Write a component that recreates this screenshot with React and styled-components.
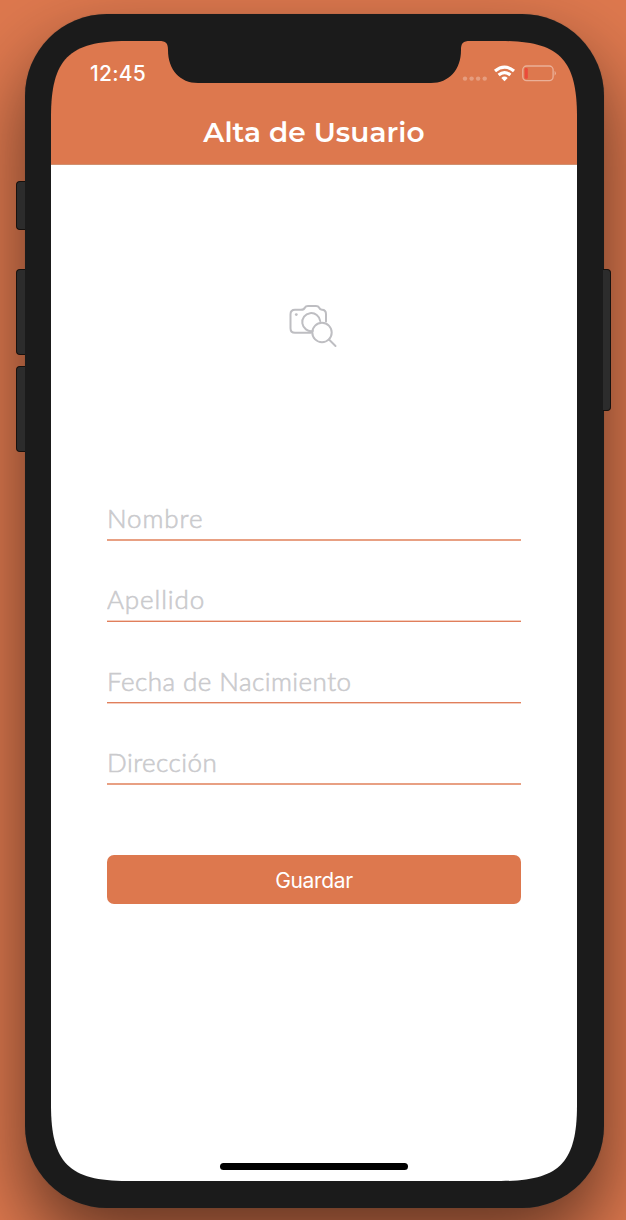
import React from 'react';
import styled, { createGlobalStyle } from 'styled-components';

const accent = '#dd784e';

const GlobalStyle = createGlobalStyle`
  *, *::before, *::after { box-sizing: border-box; }
  body { margin: 0; background: ${accent}; }
`;

const Stage = styled.div`
  height: 1220px;
  padding: 14px 22.5px 0 24.5px;
  overflow: hidden;
  background: ${accent};
`;

const Phone = styled.div`
  position: relative;
  width: 579px;
  height: 1194px;
  padding: 27px 26.5px;
  border-radius: 82px;
  background: #1b1b1b;
  box-shadow: 0 0 1px rgba(100, 80, 70, 0.8), 0 36px 76px rgba(0, 0, 0, 0.55);
`;

const SideButton = styled.span`
  position: absolute;
  top: ${(p) => p.$top}px;
  ${(p) => p.$side}: ${(p) => (p.$side === 'left' ? -8.5 : -7.5)}px;
  width: ${(p) => (p.$side === 'left' ? 9 : 8.5)}px;
  height: ${(p) => p.$height}px;
  background: #2c2c2c;
  border: 1px solid #17110e;
  border-radius: ${(p) => (p.$side === 'left' ? '4px 0 0 4px' : '0 4px 4px 0')};
  border-${(p) => (p.$side === 'left' ? 'right' : 'left')}: 0;
`;

const Screen = styled.main`
  position: relative;
  display: flex;
  flex-direction: column;
  width: 526px;
  height: 1140px;
  background: linear-gradient(${accent} 123px, #fff 123px);
  clip-path: path('M0 76 C0 18 18 0 76 0 H450 C508 0 526 18 526 76 V1064 C526 1122 508 1140 450 1140 H76 C18 1140 0 1122 0 1064 Z');
`;

const Notch = styled.svg`
  position: absolute;
  top: 0;
  left: 108px;
`;

const Header = styled.header`
  height: 124px;
  border-bottom: 1px solid #d1906f;
  color: #fff;
`;

const StatusBar = styled.div`
  display: flex;
  justify-content: space-between;
  height: 65px;
  padding: 20px 21px 0 39px;
`;

const Clock = styled.span`
  font: 500 21px/25px Inter, sans-serif;
  letter-spacing: 0.25px;
`;

const StatusIcons = styled.div`
  display: flex;
  height: 25px;
`;

const Title = styled.h1`
  margin: 0;
  padding-top: 8px;
  text-align: center;
  font: 600 28px/36px Montserrat, Inter, sans-serif;
  letter-spacing: 0.1px;
`;

const Picker = styled.button`
  display: flex;
  align-self: center;
  margin: 138px 2px 0 0;
  padding: 0;
  border: 0;
  background: none;
`;

const Form = styled.form`
  display: flex;
  flex-direction: column;
  padding: 150px 56px 0;
`;

const Field = styled.input`
  width: 100%;
  height: 41px;
  margin: 0 0 ${(p) => p.$gap}px;
  padding: 0 0 3px;
  border: 0;
  border-bottom: 1px solid ${(p) => p.$rule[0]};
  box-shadow: 0 1px ${(p) => p.$rule[1]};
  border-radius: 0;
  outline: 0;
  background: none;
  color: #333;
  font: 300 26px/34px "Avenir Next", Lato, sans-serif;
  letter-spacing: ${(p) => p.$tracking}px;

  &::placeholder {
    color: #cacacd;
    -webkit-text-stroke: 0.6px #cacacd;
    opacity: 1;
  }
`;

const SaveButton = styled.button`
  height: 49px;
  margin-top: 31px;
  padding: 2px 0 0;
  border: 0;
  border-radius: 7px;
  background: ${accent};
  color: #fff;
  font: 400 21px/26px Inter, sans-serif;
  letter-spacing: -0.35px;
`;

const HomeIndicator = styled.div`
  align-self: center;
  width: 188px;
  height: 6.5px;
  margin: auto 0 11.5px;
  border-radius: 4px;
  background: #000;
`;

const strong = '#e07f5c';
const medium = '#e8a083';
const light = '#f5cdbd';

const fields = [
  { label: 'Nombre', tracking: 0.9, gap: 40, rule: [medium, medium] },
  { label: 'Apellido', tracking: 0.9, gap: 41, rule: [light, strong] },
  { label: 'Fecha de Nacimiento', tracking: 0.45, gap: 40, rule: [strong, light] },
  { label: 'Dirección', tracking: 0.45, gap: 40, rule: [medium, medium] },
];

function StatusGlyphs() {
  return (
    <svg width="95" height="25" viewBox="0 0 95 25" fill="none">
      <g fill="#fff" opacity=".28">
        <circle cx="4" cy="17.6" r="2.2" />
        <circle cx="10.6" cy="17.6" r="2.2" />
        <circle cx="17.1" cy="17.6" r="2.2" />
        <circle cx="23.7" cy="17.6" r="2.2" />
      </g>
      <g stroke="#fff" strokeWidth="3.2">
        <path d="M34 10Q43.5 2.2 53 10" />
        <path d="M37.6 14Q43.5 9.2 49.4 14" />
      </g>
      <path d="M40.3 17Q43.5 14.2 46.7 17L43.5 20.3Z" fill="#fff" />
      <rect x="61.8" y="5" width="30.3" height="14.6" rx="3.8" stroke="#fff" strokeOpacity=".42" strokeWidth="1.3" />
      <path d="M93.6 9.8Q96.2 12.3 93.6 14.8Z" fill="#fff" fillOpacity=".42" />
      <rect x="63.7" y="7" width="3.1" height="10.7" rx="1.2" fill="#eb4b3a" />
    </svg>
  );
}

function CameraSearch() {
  return (
    <svg width="50" height="46" viewBox="0 0 50 46" fill="none" stroke="#bebec2" strokeWidth="2" strokeLinecap="round" strokeLinejoin="round">
      <path d="M23 29.8H7Q2.5 29.8 2.5 25.3V11.3Q2.5 6.8 7 6.8H13Q16 6.8 17 4.5Q17.7 3 20 3H28Q30.3 3 31 4.5Q32 6.8 34 6.8Q38 6.8 38 11.3V18.5" />
      <path d="M24.7 28A9 9 0 1 1 32.2 18" />
      <circle cx="34" cy="29.5" r="9.7" />
      <path d="m41 36.5 6.5 6.5" />
      <circle cx="8.3" cy="11.6" r="1.4" fill="#bebec2" stroke="none" />
    </svg>
  );
}

export default function App() {
  return (
    <>
      <GlobalStyle />
      <Stage>
        <Phone>
          <SideButton $side="left" $top={167} $height={49} />
          <SideButton $side="left" $top={255} $height={86} />
          <SideButton $side="left" $top={352} $height={86} />
          <SideButton $side="right" $top={255} $height={142} />
          <Screen>
            <Header>
              <StatusBar>
                <Clock>12:45</Clock>
                <StatusIcons><StatusGlyphs /></StatusIcons>
              </StatusBar>
              <Title>Alta de Usuario</Title>
            </Header>
            <Notch width="311" height="43" viewBox="0 0 311 43" fill="#1b1b1b">
              <path d="M0 0C7 0 9 2 9 9C9 29 21 42 39 42H272C290 42 302 29 302 9C302 2 304 0 311 0Z" />
            </Notch>
            <Picker type="button" aria-label="Foto"><CameraSearch /></Picker>
            <Form>
              {fields.map((f) => (
                <Field
                  key={f.label}
                  placeholder={f.label}
                  $tracking={f.tracking}
                  $gap={f.gap}
                  $rule={f.rule}
                />
              ))}
              <SaveButton type="button">Guardar</SaveButton>
            </Form>
            <HomeIndicator />
          </Screen>
        </Phone>
      </Stage>
    </>
  );
}
